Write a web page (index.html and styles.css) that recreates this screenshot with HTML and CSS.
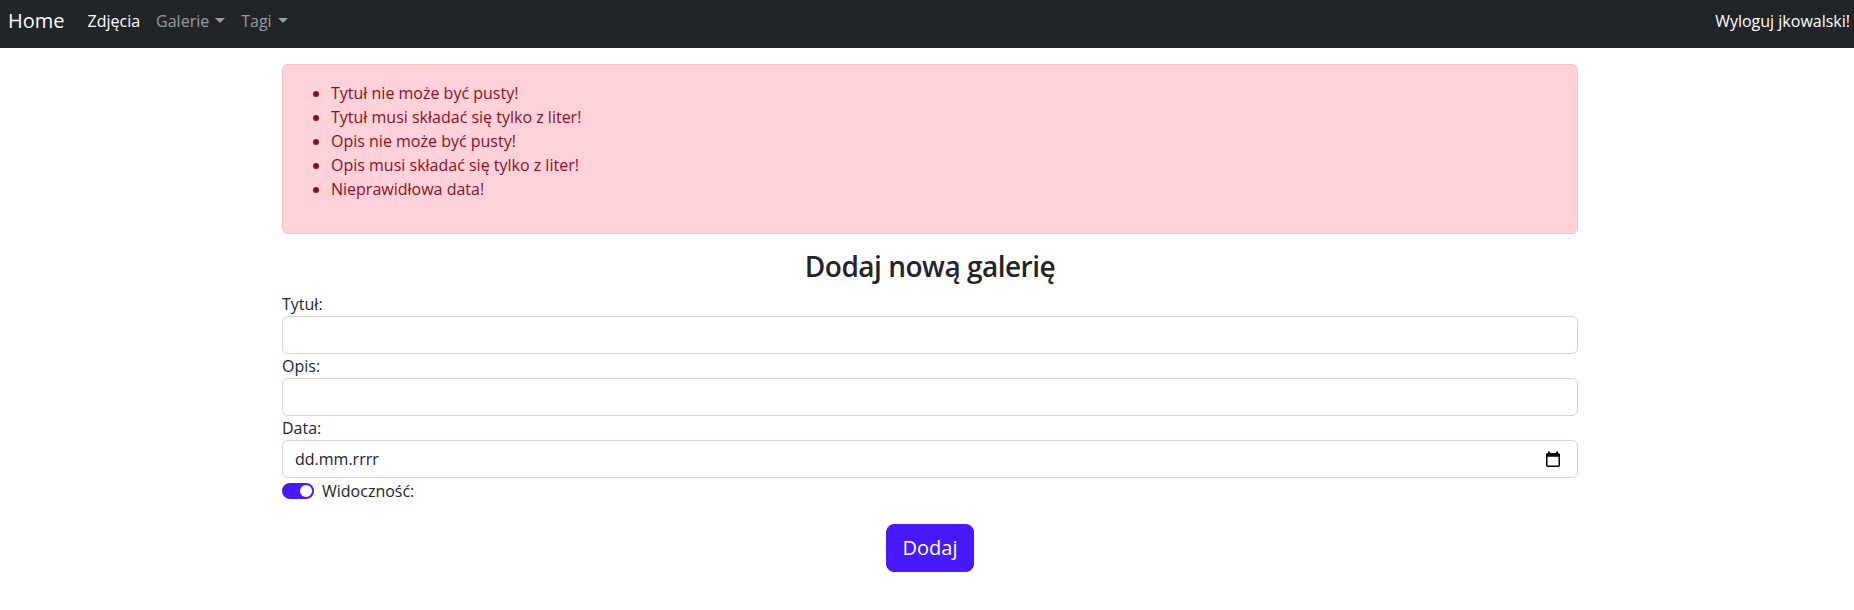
FILE: index.html
```html
<!DOCTYPE html>
<html lang="pl">
<head>
<meta charset="utf-8">
<title>Dodaj nową galerię</title>
<link rel="stylesheet" href="styles.css">
</head>
<body>
<nav class="navbar">
  <div class="nav-left">
    <a class="brand" href="#">Home</a>
    <ul class="nav-links">
      <li><a class="nav-link active" href="#">Zdjęcia</a></li>
      <li><a class="nav-link dropdown" href="#">Galerie</a></li>
      <li><a class="nav-link dropdown" href="#">Tagi</a></li>
    </ul>
  </div>
  <a class="nav-link logout" href="#">Wyloguj jkowalski!</a>
</nav>
<main class="container">
  <div class="alert">
    <ul class="errors">
      <li>Tytuł nie może być pusty!</li>
      <li>Tytuł musi składać się tylko z liter!</li>
      <li>Opis nie może być pusty!</li>
      <li>Opis musi składać się tylko z liter!</li>
      <li>Nieprawidłowa data!</li>
    </ul>
  </div>
  <h3 class="title">Dodaj nową galerię</h3>
  <form class="gallery-form">
    <label class="form-label" for="tytul">Tytuł:</label>
    <input class="form-control" id="tytul" type="text">
    <label class="form-label" for="opis">Opis:</label>
    <input class="form-control" id="opis" type="text">
    <label class="form-label">Data:</label>
    <div class="form-control date-control">
      <span class="date-text">dd.mm.rrrr</span>
      <svg class="cal-icon" width="16" height="16" viewBox="0 0 16 16" aria-hidden="true">
        <rect x="3" y="0.5" width="2" height="3" fill="#000"/>
        <rect x="11" y="0.5" width="2" height="3" fill="#000"/>
        <rect x="1.75" y="2.75" width="12.5" height="12.5" rx="1" fill="none" stroke="#000" stroke-width="1.5"/>
        <rect x="1.75" y="2.75" width="12.5" height="3" fill="#000"/>
      </svg>
    </div>
    <div class="form-check">
      <span class="switch"></span>
      <label class="check-label">Widoczność:</label>
    </div>
    <div class="actions">
      <button class="btn" type="button">Dodaj</button>
    </div>
  </form>
</main>
</body>
</html>
```
FILE: styles.css
```css
* { box-sizing: border-box; }
html, body { margin: 0; padding: 0; }
body {
  font-family: "Open Sans", "Noto Sans", sans-serif;
  font-size: 16px;
  line-height: 1.5;
  color: #212529;
  background: #fff;
}
a { text-decoration: none; }

.navbar {
  height: 48px;
  background: #212529;
  display: flex;
  justify-content: space-between;
  align-items: center;
  padding: 0 4px 6px 8px;
}
.nav-left { display: flex; align-items: center; }
.brand {
  color: #fff;
  font-size: 20px;
  line-height: 30px;
  margin-right: 15px;
}
.nav-links {
  list-style: none;
  margin: 0;
  padding: 0;
  display: flex;
}
.nav-link {
  display: block;
  padding: 0 8px;
  line-height: 24px;
  color: rgba(255, 255, 255, 0.55);
}
.nav-link.active { color: #fff; }
.nav-link.logout { color: #fff; padding-right: 0; }
.dropdown::after {
  content: "";
  display: inline-block;
  margin-left: 6px;
  vertical-align: 4px;
  border-top: 5px solid;
  border-left: 5px solid transparent;
  border-right: 5px solid transparent;
}

.container {
  width: 1296px;
  margin: 16px 0 0 calc(50% - 645px);
}
.alert {
  background: #fed2d8;
  border: 1px solid #fbbfc6;
  border-radius: 6px;
  color: #8a0f1e;
  padding: 16px;
  margin-bottom: 16px;
}
.errors {
  margin: 0 0 16px;
  padding-left: 32px;
}
.title {
  margin: 0 0 8px;
  text-align: center;
  font-size: 28px;
  line-height: 1.2;
  font-weight: 600;
  letter-spacing: -0.5px;
}
.gallery-form { display: flex; flex-direction: column; }
.form-label { display: block; line-height: 24px; }
.form-control {
  display: block;
  width: 100%;
  height: 38px;
  padding: 6px 12px;
  font: inherit;
  color: #212529;
  background: #fff;
  border: 1px solid #ced4da;
  border-radius: 6px;
}
.date-control {
  display: flex;
  align-items: center;
  justify-content: space-between;
  padding-right: 16px;
}
.cal-icon { display: block; }
.form-check {
  display: flex;
  align-items: flex-start;
  min-height: 24px;
  margin: 1px 0 2px;
}
.switch {
  position: relative;
  width: 32px;
  height: 16px;
  margin-top: 4px;
  margin-right: 8px;
  border-radius: 8px;
  background: #4818ff;
  flex: none;
}
.switch::after {
  content: "";
  position: absolute;
  right: 2px;
  top: 2px;
  width: 12px;
  height: 12px;
  border-radius: 50%;
  background: #fff;
}
.check-label { line-height: 24px; }
.actions {
  display: flex;
  justify-content: center;
  padding-top: 19px;
}
.btn {
  font: inherit;
  font-size: 20px;
  line-height: 30px;
  padding: 8px 16px;
  color: #fff;
  background: #4818ff;
  border: 1px solid #4818ff;
  border-radius: 8px;
}
```
